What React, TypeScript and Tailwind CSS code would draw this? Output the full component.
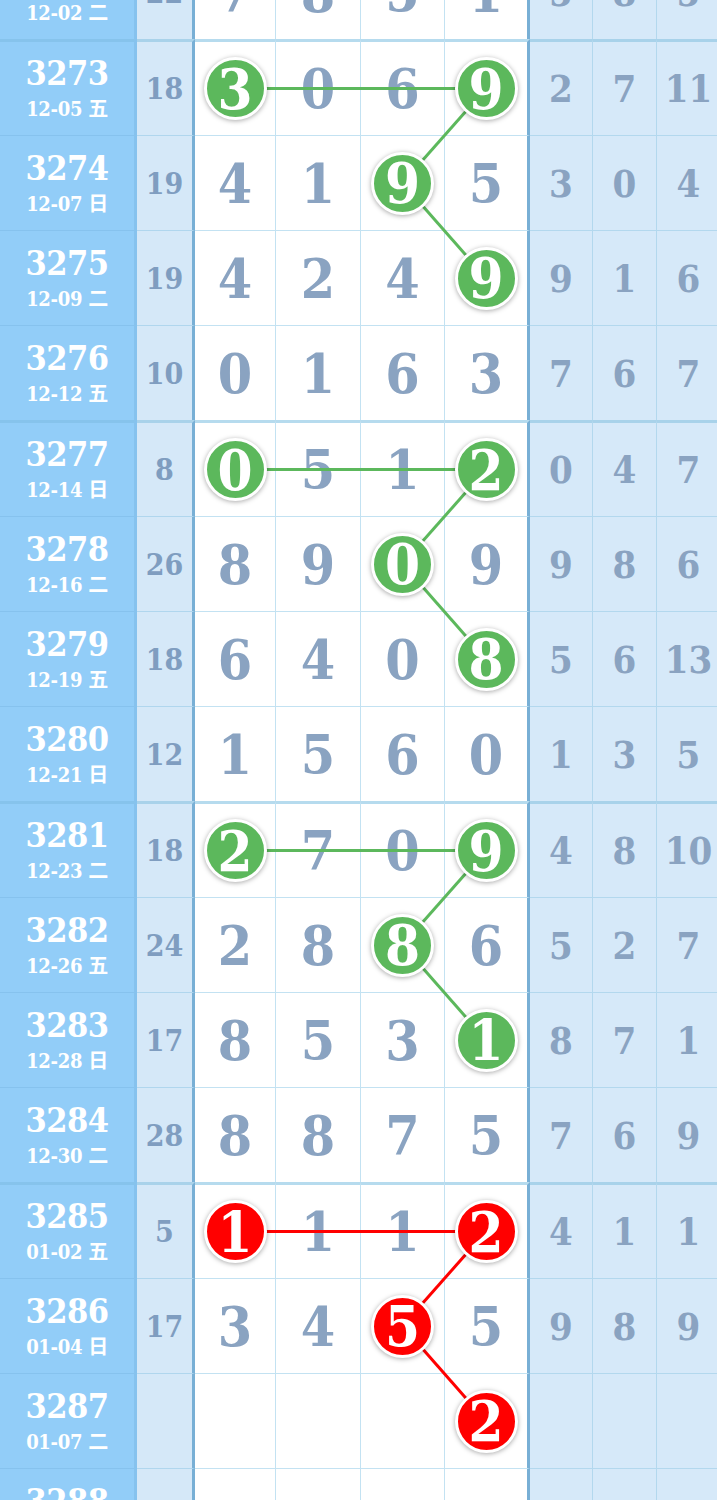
import React from "react";

type Row = { no: string; date: string; sum: string; d: string[]; r: string[] };

const rows: Row[] = [
  { no: "3272", date: "12-02 二", sum: "22", d: ["7", "8", "5", "1"], r: ["5", "8", "5"] },
  { no: "3273", date: "12-05 五", sum: "18", d: ["3", "0", "6", "9"], r: ["2", "7", "11"] },
  { no: "3274", date: "12-07 日", sum: "19", d: ["4", "1", "9", "5"], r: ["3", "0", "4"] },
  { no: "3275", date: "12-09 二", sum: "19", d: ["4", "2", "4", "9"], r: ["9", "1", "6"] },
  { no: "3276", date: "12-12 五", sum: "10", d: ["0", "1", "6", "3"], r: ["7", "6", "7"] },
  { no: "3277", date: "12-14 日", sum: "8", d: ["0", "5", "1", "2"], r: ["0", "4", "7"] },
  { no: "3278", date: "12-16 二", sum: "26", d: ["8", "9", "0", "9"], r: ["9", "8", "6"] },
  { no: "3279", date: "12-19 五", sum: "18", d: ["6", "4", "0", "8"], r: ["5", "6", "13"] },
  { no: "3280", date: "12-21 日", sum: "12", d: ["1", "5", "6", "0"], r: ["1", "3", "5"] },
  { no: "3281", date: "12-23 二", sum: "18", d: ["2", "7", "0", "9"], r: ["4", "8", "10"] },
  { no: "3282", date: "12-26 五", sum: "24", d: ["2", "8", "8", "6"], r: ["5", "2", "7"] },
  { no: "3283", date: "12-28 日", sum: "17", d: ["8", "5", "3", "1"], r: ["8", "7", "1"] },
  { no: "3284", date: "12-30 二", sum: "28", d: ["8", "8", "7", "5"], r: ["7", "6", "9"] },
  { no: "3285", date: "01-02 五", sum: "5", d: ["1", "1", "1", "2"], r: ["4", "1", "1"] },
  { no: "3286", date: "01-04 日", sum: "17", d: ["3", "4", "5", "5"], r: ["9", "8", "9"] },
  { no: "3287", date: "01-07 二", sum: "", d: ["", "", "", "2"], r: ["", "", ""] },
  { no: "3288", date: "01-09 四", sum: "", d: ["", "", "", ""], r: ["", "", ""] },
];

const ballCols = (i: number): number[] => {
  if (i < 1 || i > 15) return [];
  const pos = (i - 1) % 4;
  if (pos === 0) return [0, 3];
  if (pos === 1) return [2];
  if (pos === 2) return [3];
  return [];
};

const isRed = (i: number) => i >= 13;

const FONT =
  "font-['DejaVu_Serif_Condensed','DejaVu_Serif','Noto_Sans_CJK_SC',serif] font-stretch-condensed font-bold";

const mainW = ["w-[81px]", "w-[85px]", "w-[84px]", "w-[85px]"];
const rightW = ["w-[63px]", "w-[64px]", "w-[64px]"];

function Ball({ n, red }: { n: string; red: boolean }) {
  return (
    <div
      className={`relative z-20 flex h-[63px] w-[63px] shrink-0 items-center justify-center rounded-full border-[3px] border-white shadow-[0_1px_5px_rgba(0,0,0,0.35)] ${
        red ? "bg-[#ff0000]" : "bg-[#5cb85c]"
      }`}
    >
      <span className="text-[56px] leading-none text-white">{n}</span>
    </div>
  );
}

export default function App() {
  const rowTop = (i: number) => {
    if (i === 0) return 0;
    const g = Math.floor((i - 1) / 4);
    const pos = (i - 1) % 4;
    const base = 94 + 381 * g;
    return base + [0, 97, 192, 287][pos];
  };
  const rowCenter = (i: number) => {
    const pos = (i - 1) % 4;
    const t = rowTop(i);
    if (pos === 0) return t + 3 + 46.5;
    return t + 47;
  };
  const colX = [235, 318.5, 402.5, 486];

  const segs: { x1: number; y1: number; x2: number; y2: number; c: string }[] = [];
  for (let g = 0; g < 4; g++) {
    const a = 1 + g * 4;
    const c = g === 3 ? "#ff0000" : "#5cb85c";
    const y0 = rowCenter(a);
    const y1 = rowCenter(a + 1);
    const y2 = rowCenter(a + 2);
    segs.push({ x1: colX[0], y1: y0, x2: colX[3], y2: y0, c });
    segs.push({ x1: colX[3], y1: y0, x2: colX[2], y2: y1, c });
    segs.push({ x1: colX[2], y1: y1, x2: colX[3], y2: y2, c });
  }

  return (
    <div className={`h-[1500px] w-[717px] overflow-hidden bg-white ${FONT}`}>
      <div className="relative -mt-[55px] w-[750px]">
        {rows.map((row, i) => {
          const pos = i === 0 ? 3 : (i - 1) % 4;
          const h = pos === 0 ? "h-[97px]" : pos === 3 ? "h-[94px]" : "h-[95px]";
          const top = pos === 0 ? "border-t-[3px]" : "";
          const bot = pos === 3 ? "" : "border-b";
          const balls = ballCols(i);
          return (
            <div key={row.no} className={`flex ${h}`}>
              <div
                className={`flex w-[137px] shrink-0 flex-col items-center justify-center border-r-[3px] border-[#86c2ee] bg-[#92cdf8] pb-[2px] text-white ${top} ${bot} border-t-[#86c3ec] border-b-[#86c2ee]`}
              >
                <div className="text-[34px] leading-[36px] tracking-[-0.5px]">{row.no}</div>
                <div className="mt-[7px] text-[20px] leading-[22px] tracking-[-0.3px]">{row.date}</div>
              </div>
              <div
                className={`flex w-[58px] shrink-0 items-center justify-center border-r-[3px] border-r-[#78afd5] bg-[#d5e8f8] text-[30px] text-[#7f9dc0] ${top} ${bot} border-t-[#a9d2ea] border-b-[#b0d6ee]`}
              >
                {row.sum}
              </div>
              {row.d.map((v, c) => (
                <div
                  key={c}
                  className={`flex ${mainW[c]} shrink-0 items-center justify-center bg-white text-[55px] leading-none text-[#8aa3c1] ${
                    c === 3 ? "border-r-[3px] border-r-[#78afd5]" : "border-r border-r-[#c3e2f2]"
                  } ${top} ${bot} border-t-[#b6dbee] border-b-[#c3e2f2]`}
                >
                  {balls.includes(c) ? <Ball n={v} red={isRed(i)} /> : v}
                </div>
              ))}
              {row.r.map((v, c) => (
                <div
                  key={c}
                  className={`flex ${rightW[c]} shrink-0 items-center justify-center border-r border-r-[#b3d8ee] bg-[#d6e9f9] text-[38px] text-[#8aa3c1] ${top} ${bot} border-t-[#a8d2ea] border-b-[#b3d8ee]`}
                >
                  {v}
                </div>
              ))}
            </div>
          );
        })}
        <svg
          className="pointer-events-none absolute left-0 top-0 z-10"
          width={750}
          height={1700}
          viewBox="0 0 750 1700"
        >
          {segs.map((s, k) => (
            <line key={k} x1={s.x1} y1={s.y1} x2={s.x2} y2={s.y2} stroke={s.c} strokeWidth={3} />
          ))}
        </svg>
      </div>
    </div>
  );
}
